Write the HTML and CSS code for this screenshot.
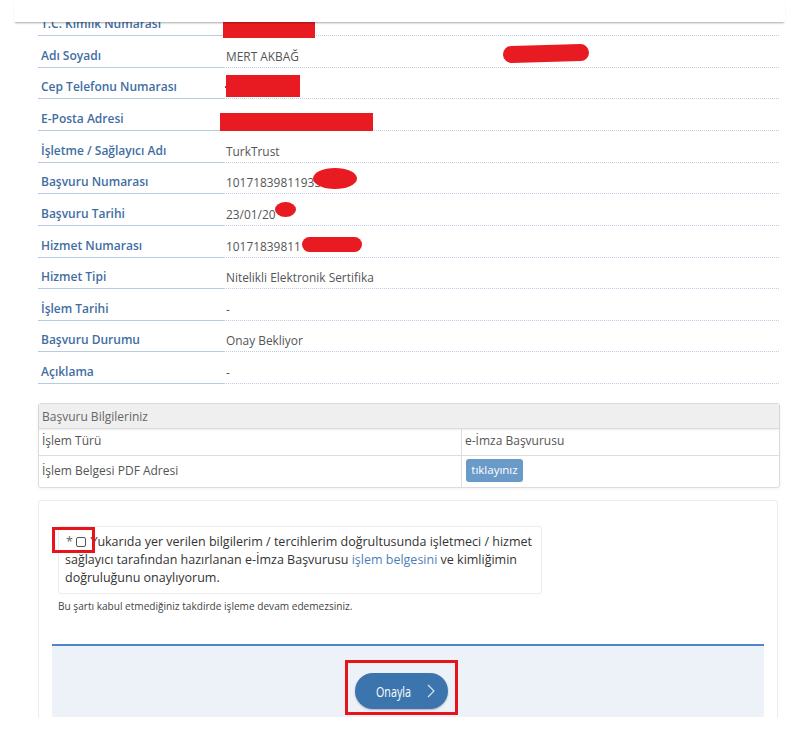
FILE: index.html
```html
<!DOCTYPE html>
<html lang="tr">
<head>
<meta charset="utf-8">
<title>Başvuru</title>
<link rel="stylesheet" href="styles.css">
</head>
<body>
<div class="topbar"></div>
<main class="page">
  <div class="info">
    <div class="row"><div class="lbl">T.C. Kimlik Numarası</div><div class="val"></div></div>
    <div class="row"><div class="lbl">Adı Soyadı</div><div class="val">MERT AKBAĞ</div></div>
    <div class="row"><div class="lbl">Cep Telefonu Numarası</div><div class="val"></div></div>
    <div class="row"><div class="lbl">E-Posta Adresi</div><div class="val"></div></div>
    <div class="row"><div class="lbl">İşletme / Sağlayıcı Adı</div><div class="val">TurkTrust</div></div>
    <div class="row"><div class="lbl">Başvuru Numarası</div><div class="val">10171839811933</div></div>
    <div class="row"><div class="lbl">Başvuru Tarihi</div><div class="val">23/01/20</div></div>
    <div class="row"><div class="lbl">Hizmet Numarası</div><div class="val">10171839811</div></div>
    <div class="row"><div class="lbl">Hizmet Tipi</div><div class="val">Nitelikli Elektronik Sertifika</div></div>
    <div class="row"><div class="lbl">İşlem Tarihi</div><div class="val">-</div></div>
    <div class="row"><div class="lbl">Başvuru Durumu</div><div class="val">Onay Bekliyor</div></div>
    <div class="row"><div class="lbl">Açıklama</div><div class="val">-</div></div>
  </div>

  <div class="tbl">
    <div class="tbl-head">Başvuru Bilgileriniz</div>
    <div class="tbl-row"><div class="c1">İşlem Türü</div><div class="c2">e-İmza Başvurusu</div></div>
    <div class="tbl-row tall"><div class="c1">İşlem Belgesi PDF Adresi</div><div class="c2"><span class="btn-sm">tıklayınız</span></div></div>
  </div>

  <div class="card">
    <div class="consent">
      <span class="star">*</span> <span class="cb"></span> Yukarıda yer verilen bilgilerim / tercihlerim doğrultusunda işletmeci / hizmet sağlayıcı tarafından hazırlanan e-İmza Başvurusu <span class="link">işlem belgesini</span> ve kimliğimin doğruluğunu onaylıyorum.
    </div>
    <div class="note">Bu şartı kabul etmediğiniz takdirde işleme devam edemezsiniz.</div>
    <div class="actions">
      <span class="btn"><span class="btn-txt">Onayla</span><svg class="chev" width="8" height="14" viewBox="0 0 8 14"><path d="M1 1 L7 7 L1 13" fill="none" stroke="#dfe9f4" stroke-width="1.1"/></svg></span>
    </div>
  </div>
</main>

<div class="red r1"></div>
<div class="red r2"></div>
<div class="red r3"></div>
<div class="red r3b"></div>
<div class="red r4"></div>
<div class="red r5"></div>
<div class="red r6"></div>
<div class="red r7"></div>
<div class="mark m1"></div>
<div class="mark m2"></div>
</body>
</html>
```

FILE: styles.css
```css
html, body {
  margin: 0;
  padding: 0;
  background: #fff;
}
body {
  font-family: "Open Sans", "DejaVu Sans", sans-serif;
  height: 732px;
  overflow: hidden;
  position: relative;
}
.topbar {
  position: absolute;
  top: 0;
  left: 14px;
  width: 771px;
  height: 22px;
  background: #fff;
  box-shadow: 0 2px 2px -1px rgba(0,0,0,0.35);
  z-index: 5;
}
.page {
  width: 741px;
  margin-left: 38px;
  padding-top: 4.6px;
}
.info {
  display: flex;
  flex-direction: column;
}
.row {
  display: flex;
  height: 31.64px;
}
.lbl {
  width: 185px;
  box-sizing: border-box;
  padding: 10.6px 0 0 3px;
  border-bottom: 1px solid #b7cce2;
  color: #3f6ea3;
  font-weight: 600;
  font-size: 12px;
  line-height: 18px;
  white-space: nowrap;
}
.val {
  flex: 1;
  box-sizing: border-box;
  padding: 10.6px 0 0 3px;
  border-bottom: 1px dotted #b9cde3;
  color: #555;
  font-size: 11.9px;
  line-height: 18px;
  white-space: nowrap;
}
.tbl {
  margin-top: 19px;
  width: 740px;
  border: 1px solid #dcdcdc;
  border-radius: 3px;
  box-shadow: 0 1px 3px rgba(0,0,0,0.06);
  font-size: 12px;
  color: #555;
}
.tbl-head {
  height: 25px;
  box-sizing: border-box;
  padding: 4px 0 0 3px;
  background: #efefef;
  border-bottom: 1px solid #ddd;
  box-shadow: 0 1px 2px rgba(0,0,0,0.08);
  line-height: 18px;
  color: #666;
}
.tbl-row {
  display: flex;
  height: 26px;
  border-bottom: 1px solid #ddd;
  line-height: 18px;
}
.tbl-row.tall {
  height: 31px;
  border-bottom: none;
}
.c1 {
  width: 423px;
  box-sizing: border-box;
  padding: 3px 0 0 3px;
  border-right: 1px solid #ddd;
}
.c2 {
  flex: 1;
  box-sizing: border-box;
  padding: 3px 0 0 3px;
}
.tall .c1 { padding-top: 6px; }
.tall .c2 { padding-top: 3px; padding-left: 4px; }
.btn-sm {
  display: inline-block;
  height: 23px;
  width: 57px;
  box-sizing: border-box;
  padding-top: 2px;
  text-align: center;
  background: #6a9ac7;
  color: #fff;
  border-radius: 3px;
  font-size: 11.5px;
  line-height: 18px;
}
.card {
  margin-top: 12px;
  width: 740px;
  height: 218px;
  box-sizing: border-box;
  border: 1px solid #ececec;
  border-bottom: none;
  border-radius: 4px 4px 0 0;
  padding: 25px 13px 0 13px;
}
.consent {
  margin-left: 6px;
  width: 484px;
  box-sizing: border-box;
  border: 1px solid #ececec;
  border-radius: 3px;
  padding: 6px 8px 6px 6px;
  font-size: 12.5px;
  line-height: 18px;
  color: #333;
}
.star { color: #666; margin-left: 1px; }
.cb {
  display: inline-block;
  width: 8px;
  height: 8px;
  border: 1px solid #555;
  border-radius: 2px;
  vertical-align: -1px;
  margin-right: 1px;
}
.link { color: #4b7fb5; }
.note {
  margin: 5px 0 0 6px;
  font-size: 10.1px;
  line-height: 14px;
  color: #444;
}
.actions {
  margin-top: 31px;
  height: 73px;
  box-sizing: border-box;
  border-top: 2px solid #4d88c5;
  background: #edf1f8;
  display: flex;
  justify-content: center;
  align-items: flex-start;
  padding: 27px 14px 0 0;
}
.btn {
  display: inline-flex;
  align-items: center;
  justify-content: center;
  gap: 18px;
  width: 93px;
  height: 36px;
  box-sizing: border-box;
  padding-left: 8px;
  border-radius: 18px;
  background: #3c75ad;
  box-shadow: 0 1px 2px rgba(0,0,0,0.25);
  color: #fff;
  font-size: 14.5px;
}
.btn-txt {
  display: inline-block;
  width: 33px;
  transform: scaleX(0.74);
  transform-origin: left center;
  white-space: nowrap;
}
.chev { display: block; }

.red {
  position: absolute;
  background: #e91b22;
  z-index: 3;
}
.r1 { left: 223px; top: 14px; width: 92px; height: 24px; }
.r2 { left: 503px; top: 45px; width: 86px; height: 17px; border-radius: 9px; transform: rotate(-1.5deg); }
.r3 { left: 226px; top: 75px; width: 74px; height: 22px; }
.r3b { left: 225px; top: 86px; width: 4px; height: 2px; }
.r4 { left: 220px; top: 113px; width: 153px; height: 18px; }
.r5 { left: 313px; top: 168px; width: 44px; height: 21px; border-radius: 50%; }
.r6 { left: 275px; top: 202px; width: 21px; height: 15px; border-radius: 50%; }
.r7 { left: 302px; top: 237px; width: 60px; height: 15px; border-radius: 8px; }
.mark {
  position: absolute;
  border: 3px solid #e8141c;
  box-sizing: border-box;
  z-index: 4;
}
.m1 { left: 52px; top: 527px; width: 43px; height: 26px; }
.m2 { left: 345px; top: 660px; width: 113px; height: 55px; }
```
